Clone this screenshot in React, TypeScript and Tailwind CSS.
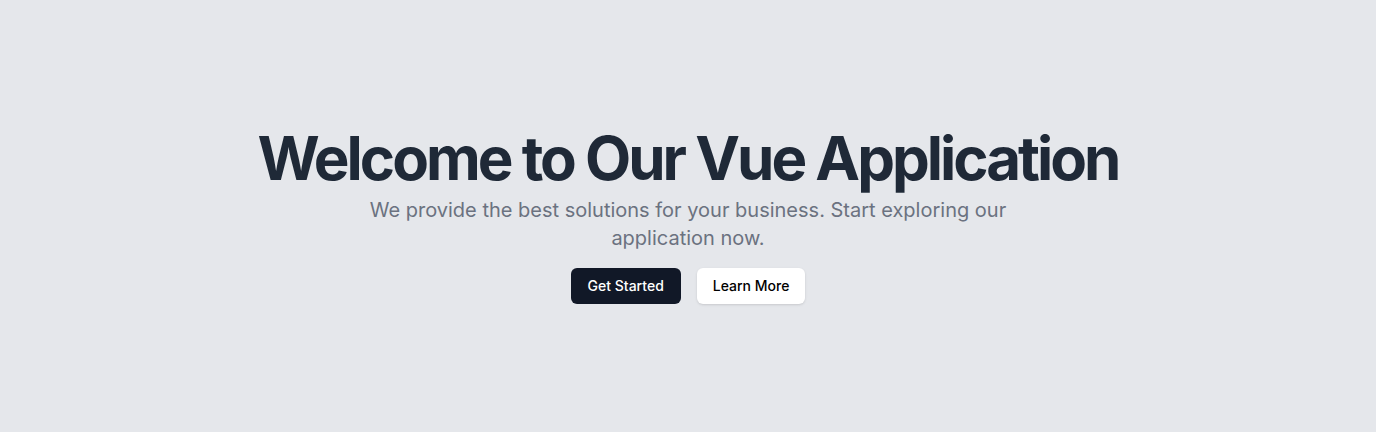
export default function App() {
  return (
    <main
      className="flex min-h-screen w-full items-center justify-center bg-[#e5e7eb]"
      style={{ fontFamily: "Inter, 'Noto Sans', sans-serif" }}
    >
      <div className="flex flex-col items-center text-center">
        <h1 className="text-6xl font-bold tracking-tighter text-[#1f2937]">
          Welcome to Our Vue Application
        </h1>
        <p className="mt-2 max-w-2xl text-xl text-[#6b7280]">
          We provide the best solutions for your business. Start exploring our application now.
        </p>
        <div className="mt-4 flex gap-4">
          <button className="rounded-md bg-[#111827] px-[17px] py-2 text-sm font-medium text-white">
            Get Started
          </button>
          <button className="rounded-md bg-white px-4 py-2 text-sm font-medium text-black shadow-sm">
            Learn More
          </button>
        </div>
      </div>
    </main>
  );
}
